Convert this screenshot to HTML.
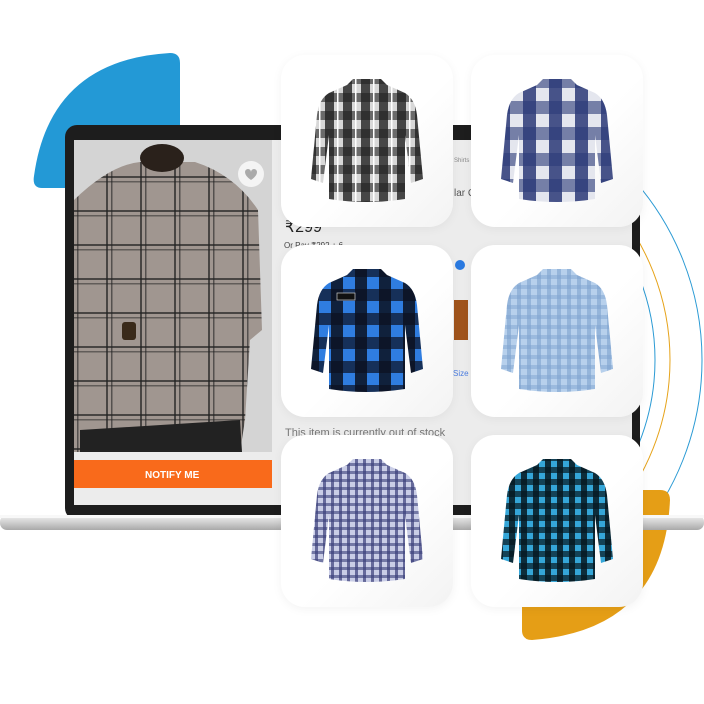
<!DOCTYPE html>
<html><head><meta charset="utf-8"><style>
body{margin:0;width:704px;height:704px;background:#fff;position:relative;overflow:hidden;font-family:"Liberation Sans",sans-serif}
.abs{position:absolute}
.card{position:absolute;width:172px;height:172px;background:linear-gradient(135deg,#fff 0%,#fff 55%,#f3f3f3 100%);border-radius:24px;box-shadow:0 2px 10px rgba(0,0,0,0.05)}
.card svg{position:absolute;left:26px;top:16px}
</style></head><body>
<svg class="abs" style="left:0;top:0" width="704" height="704">
 <defs>
  <pattern id="p1" width="18" height="18" patternUnits="userSpaceOnUse"><rect width="18" height="18" fill="#d8d8d8"/><rect width="9" height="18" fill="#222" opacity=".8"/><rect width="18" height="9" fill="#222" opacity=".6"/><rect x="12" width="1.5" height="18" fill="#fff"/></pattern>
  <pattern id="p2" width="26" height="26" patternUnits="userSpaceOnUse"><rect width="26" height="26" fill="#e4e6ee"/><rect width="13" height="26" fill="#2c3a78" opacity=".85"/><rect width="26" height="13" fill="#2c3a78" opacity=".6"/></pattern>
  <pattern id="p3" width="24" height="24" patternUnits="userSpaceOnUse"><rect width="24" height="24" fill="#2f7de0"/><rect width="12" height="24" fill="#0b1020" opacity=".85"/><rect width="24" height="12" fill="#0b1020" opacity=".7"/></pattern>
  <pattern id="p4" width="10" height="10" patternUnits="userSpaceOnUse"><rect width="10" height="10" fill="#b7d0ec"/><rect width="4" height="10" fill="#7fa3cf" opacity=".6"/><rect width="10" height="4" fill="#7fa3cf" opacity=".5"/></pattern>
  <pattern id="p5" width="8" height="8" patternUnits="userSpaceOnUse"><rect width="8" height="8" fill="#c9cde6"/><rect width="3" height="8" fill="#3a3f7a" opacity=".7"/><rect width="8" height="3" fill="#3a3f7a" opacity=".6"/></pattern>
  <pattern id="p6" width="12" height="12" patternUnits="userSpaceOnUse"><rect width="12" height="12" fill="#35a6d8"/><rect width="6" height="12" fill="#061820" opacity=".85"/><rect width="12" height="6" fill="#061820" opacity=".7"/></pattern>
  <pattern id="pg" width="34" height="34" patternUnits="userSpaceOnUse"><rect width="34" height="34" fill="#a09690"/><rect x="4" width="2" height="34" fill="#222" opacity=".7"/><rect x="9" width="1.5" height="34" fill="#222" opacity=".6"/><rect y="6" width="34" height="2" fill="#222" opacity=".7"/><rect y="11" width="34" height="1.5" fill="#222" opacity=".5"/></pattern>
  <linearGradient id="base" x1="0" y1="0" x2="0" y2="1"><stop offset="0" stop-color="#f2f2f2"/><stop offset=".5" stop-color="#cfcfcf"/><stop offset="1" stop-color="#a9a9a9"/></linearGradient>
  <clipPath id="arcclip"><rect x="600" y="100" width="104" height="400"/></clipPath>
  <symbol id="shirt" viewBox="0 0 120 130"><path d="M46,4 L74,4 L80,10 L98,18 Q108,24 110,40 L116,104 L104,108 L98,60 L98,124 Q60,130 22,124 L22,60 L16,108 L4,104 L10,40 Q12,24 22,18 L40,10 Z"/></symbol>
 </defs>
 <path d="M170,53 Q180,53 180,63 L180,188 L42,188 Q32,188 34,176 Q50,60 170,53 Z" fill="#2399d6"/>
 <g fill="none" stroke-width="1" clip-path="url(#arcclip)">
  <circle cx="430" cy="360" r="272" stroke="#2a9ad4"/>
  <circle cx="430" cy="360" r="240" stroke="#e6a31a"/>
  <circle cx="430" cy="360" r="225" stroke="#2a9ad4"/>
 </g>
 <path d="M522,490 L660,490 Q670,490 670,500 Q664,630 532,640 Q522,640 522,630 Z" fill="#e59e16"/>
 <rect x="65" y="125" width="575" height="395" rx="12" fill="#1d1d1d"/>
 <rect x="74" y="140" width="558" height="365" fill="#ececec"/>
 <rect x="74" y="140" width="198" height="312" fill="#d4d4d4"/>
 <path d="M74,200 Q110,165 140,162 L195,162 Q235,175 258,210 L262,330 L250,340 L245,420 L240,452 L74,452 Z" fill="url(#pg)"/>
 <path d="M80,430 L240,420 L242,452 L80,452Z" fill="#222"/>
 <ellipse cx="162" cy="158" rx="22" ry="14" fill="#2a211b"/>
 <rect x="122" y="322" width="14" height="18" rx="3" fill="#3a2a1a"/>
 <circle cx="251" cy="174" r="13" fill="#f4f4f4"/>
 <path d="M245,172 a3,3 0 0 1 6,0 a3,3 0 0 1 6,0 q0,4 -6,8 q-6,-4 -6,-8z" fill="#aaa"/>
 <rect x="74" y="460" width="198" height="28" fill="#f96a1b"/>
 <text x="145" y="478" font-size="10" font-weight="bold" fill="#fff">NOTIFY ME</text>
 <text x="285" y="232" font-size="16" fill="#222">₹299</text>
 <text x="284" y="248" font-size="8" fill="#444">Or Pay ₹292 + 6</text>
 <text x="285" y="436" font-size="11" fill="#777">This item is currently out of stock</text>
 <text x="454" y="162" font-size="6" fill="#888">Shirts</text>
 <text x="454" y="196" font-size="10" fill="#555">lar C</text>
 <text x="453" y="376" font-size="8" fill="#4a7ce0">Size C</text>
 <rect x="454" y="300" width="14" height="40" fill="#a0541c"/>
 <circle cx="460" cy="265" r="5" fill="#2b7ae0"/>
 <rect x="0" y="515" width="704" height="15" rx="7" fill="url(#base)"/>
 <rect x="0" y="515" width="704" height="3" fill="#f8f8f8"/>
</svg>
<div class="card" style="left:281px;top:55px"><svg width="120" height="138"><use href="#shirt" fill="url(#p1)"/></svg></div>
<div class="card" style="left:471px;top:55px"><svg width="120" height="138"><use href="#shirt" fill="url(#p2)"/></svg></div>
<div class="card" style="left:281px;top:245px"><svg width="120" height="138"><use href="#shirt" fill="url(#p3)"/><rect x="30" y="32" width="18" height="7" fill="#111" stroke="#ccc" stroke-width=".7"/></svg></div>
<div class="card" style="left:471px;top:245px"><svg width="120" height="138"><use href="#shirt" fill="url(#p4)"/></svg></div>
<div class="card" style="left:281px;top:435px"><svg width="120" height="138"><use href="#shirt" fill="url(#p5)"/></svg></div>
<div class="card" style="left:471px;top:435px"><svg width="120" height="138"><use href="#shirt" fill="url(#p6)"/></svg></div>
</body></html>
